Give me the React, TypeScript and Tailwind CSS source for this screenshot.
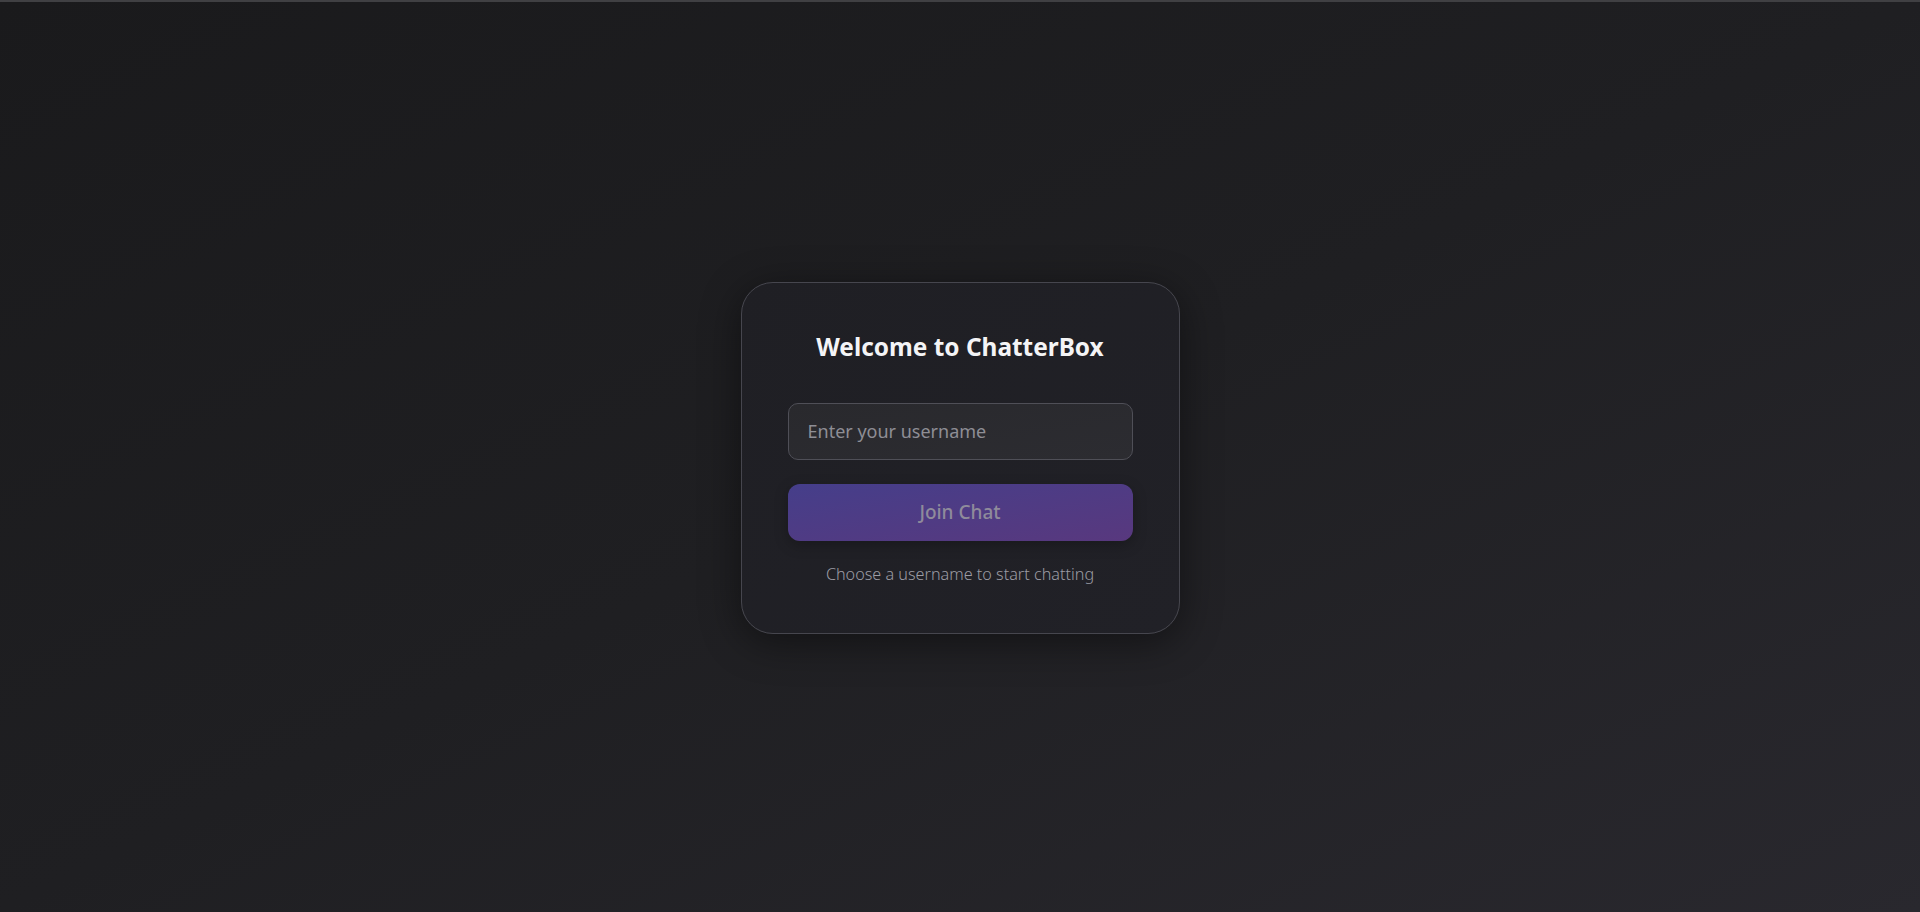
import { useState } from "react";

const App = () => {
    const [username, setUsername] = useState<string>("");

    return (
        <div
            className="min-h-screen w-full border-t-2 border-[#404043] bg-gradient-to-br from-[#1a1a1c] via-[#1f1f22] to-[#29282e] flex items-center justify-center"
            style={{ fontFamily: '"Noto Sans", "Open Sans", sans-serif' }}
        >
            <div className="w-[439px] rounded-[32px] border border-[#46464e] bg-gradient-to-br from-[#1f1f24] to-[#212127] px-[46px] pt-[48px] pb-[48px] shadow-[0_8px_40px_rgba(0,0,0,0.45)] flex flex-col items-center mt-px">
                <h1 className="text-[24.4px] leading-8 font-bold text-[#f4f4f6]">Welcome to ChatterBox</h1>

                <input
                    value={ username }
                    onChange={ e => setUsername(e.target.value) }
                    placeholder="Enter your username"
                    className="mt-10 w-full h-[57px] rounded-[10px] border border-[#4f4f57] bg-gradient-to-br from-[#29292d] to-[#2c2c31] px-[19px] text-[18px] text-white placeholder:text-[#8e8e95] outline-none"
                />

                <button
                    disabled={ !username }
                    className="mt-6 w-full h-[57px] rounded-xl bg-gradient-to-br from-[#453e8a] to-[#58387e] text-[19px] font-medium text-[#8f8b9b] shadow-[0_4px_14px_rgba(0,0,0,0.25)]"
                >
                    Join Chat
                </button>

                <p className="mt-[22px] text-[16.2px] leading-[22px] font-light text-[#9c9ca4]">Choose a username to start chatting</p>
            </div>
        </div>
    );
};

export default App;
